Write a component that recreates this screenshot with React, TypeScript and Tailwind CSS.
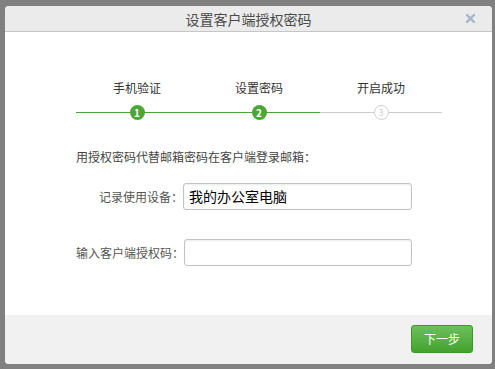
import React from "react";

const font = { fontFamily: '"Microsoft YaHei", "Noto Sans CJK SC", "Noto Sans", sans-serif' };

function Step({ n, label, state, lineGreen }: { n: number; label: string; state: "done" | "todo"; lineGreen: boolean }) {
  return (
    <div className="flex flex-col items-center">
      <div className="text-[12px] leading-[16px] text-[#333]">{label}</div>
      <div className="relative mt-[9px] h-[15px] w-full flex justify-center">
        <div className={`absolute left-0 right-0 top-[7px] h-px ${lineGreen ? "bg-[#4ba635]" : "bg-[#cccccc]"}`} />
        {state === "done" ? (
          <div className="relative z-10 w-[15px] h-[15px] rounded-full bg-[#4ba635] text-white text-[10px] leading-[15px] text-center font-bold">
            {n}
          </div>
        ) : (
          <div className="relative z-10 w-[15px] h-[15px] rounded-full bg-white border border-[#cfcfcf] text-[#cfcfcf] text-[9px] leading-[13px] text-center">
            {n}
          </div>
        )}
      </div>
    </div>
  );
}

export default function App() {
  return (
    <div className="w-[495px] h-[369px] bg-[#808080] pt-[6px] pl-[5px] overflow-hidden" style={font}>
      <div className="w-[487px] h-[358px] bg-white rounded-[4px] overflow-hidden flex flex-col">
        <div className="relative h-[26px] shrink-0 bg-[#ebebeb] border-b border-[#c6c6c6] flex items-center justify-center">
          <span className="text-[14px] leading-[18px] text-[#4a4a4a]">设置客户端授权密码</span>
          <svg className="absolute right-[17px] top-[8px]" width="9" height="9" viewBox="0 0 9 9">
            <path d="M1 1 L8 8 M8 1 L1 8" stroke="#a7b6cb" strokeWidth="2.4" strokeLinecap="square" />
          </svg>
        </div>
        <div className="flex-1 pl-[71px] pt-[48px]">
          <div className="grid grid-cols-3 w-[366px]">
            <Step n={1} label="手机验证" state="done" lineGreen={true} />
            <Step n={2} label="设置密码" state="done" lineGreen={true} />
            <Step n={3} label="开启成功" state="todo" lineGreen={false} />
          </div>
          <div className="mt-[29px] text-[12px] leading-[16px] text-[#444]">用授权密码代替邮箱密码在客户端登录邮箱：</div>
          <div className="mt-[18px] flex items-center">
            <div className="w-[107px] text-right text-[12px] leading-[16px] text-[#555] whitespace-nowrap">记录使用设备：</div>
            <div className="w-[229px] h-[27px] border border-[#c2c2c2] rounded-[3px] shadow-[inset_0_1px_2px_rgba(0,0,0,0.08)] pl-[5px] flex items-center text-[14px] text-black">
              我的办公室电脑
            </div>
          </div>
          <div className="mt-[29px] flex items-center">
            <div className="w-[108px] text-right text-[12px] leading-[16px] text-[#555] whitespace-nowrap">输入客户端授权码：</div>
            <div className="w-[228px] h-[27px] border border-[#c2c2c2] rounded-[3px] shadow-[inset_0_1px_2px_rgba(0,0,0,0.08)]" />
          </div>
        </div>
        <div className="h-[49px] shrink-0 bg-[#f1f1f1] flex justify-end items-start pt-[10px] pr-[19px]">
          <button className="w-[62px] h-[28px] rounded-[3px] border border-[#3f982c] bg-gradient-to-b from-[#6cc05b] to-[#44a22d] text-white text-[12px] leading-[16px]">
            下一步
          </button>
        </div>
      </div>
    </div>
  );
}
